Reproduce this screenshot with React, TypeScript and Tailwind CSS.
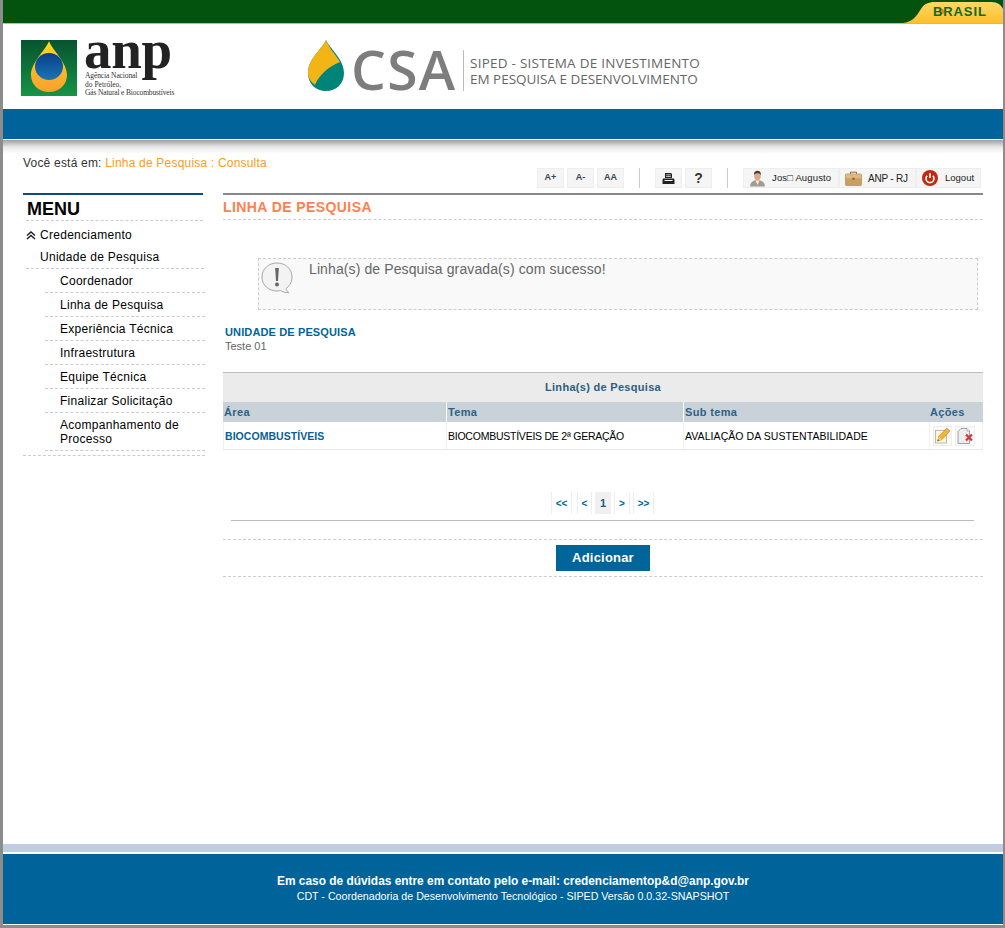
import React from "react";

const dash = "border-b border-dashed border-[#cccccc]";
const colHead = "h-[20px] bg-[#c9d2d9] pl-[1px] text-[11px] font-bold leading-[20px] tracking-[0.35px] text-[#2d6285]";

function Brasil() {
  return (
    <div className="relative w-[100px] h-[23px]">
      <svg width="100" height="23" viewBox="0 0 100 23" className="block">
        <defs>
          <linearGradient id="brGrad" x1="0" y1="0" x2="0" y2="1">
            <stop offset="0" stopColor="#ffd766" />
            <stop offset="1" stopColor="#fdbf2d" />
          </linearGradient>
        </defs>
        <path d="M0 23 C9 22 13 17 18 9 C21 4 25 2 32 2 L88 2 C95 2 98 5 100 9 L100 23 Z" fill="url(#brGrad)" />
        <circle cx="39" cy="11.5" r="2.5" fill="#e8842a" />
      </svg>
      <span className="absolute left-[30px] top-[4px] text-[13px] leading-[16px] font-bold tracking-[0.9px] text-[#0d6b1e]">BRASIL</span>
    </div>
  );
}

function AnpLogo() {
  return (
    <svg width="156" height="60" viewBox="0 0 156 60" className="block overflow-visible">
      <defs>
        <linearGradient id="anpBg" x1="0" y1="0" x2="0" y2="1">
          <stop offset="0" stopColor="#07532f" />
          <stop offset="1" stopColor="#159447" />
        </linearGradient>
        <linearGradient id="anpDrop" x1="0" y1="0" x2="0" y2="1">
          <stop offset="0" stopColor="#ffd91e" />
          <stop offset="1" stopColor="#f8a02e" />
        </linearGradient>
        <linearGradient id="anpBlue" x1="0" y1="0" x2="0" y2="1">
          <stop offset="0" stopColor="#083f86" />
          <stop offset="1" stopColor="#1b74b8" />
        </linearGradient>
      </defs>
      <rect x="0" y="1" width="56" height="56" fill="url(#anpBg)" />
      <path d="M28 2 C31 11 46 23 46 36 C46 46 38 53 28 53 C18 53 10 46 10 36 C10 23 25 11 28 2 Z" fill="url(#anpDrop)" />
      <ellipse cx="28" cy="27.5" rx="14" ry="13.5" fill="url(#anpBlue)" />
      <text x="63" y="29" fontFamily="'Liberation Serif', serif" fontSize="55" fontWeight="700" fill="#222222" letterSpacing="-0.3">anp</text>
      <text x="64" y="39" fontFamily="'Liberation Serif', serif" fontSize="7.5" fill="#333333" letterSpacing="-0.1">Agência Nacional</text>
      <text x="64" y="48" fontFamily="'Liberation Serif', serif" fontSize="7.5" fill="#333333">do Petróleo,</text>
      <text x="64" y="56" fontFamily="'Liberation Serif', serif" fontSize="7.5" fill="#333333" letterSpacing="-0.15">Gás Natural e Biocombustíveis</text>
    </svg>
  );
}

function CsaLogo() {
  return (
    <svg width="396" height="56" viewBox="0 0 396 56" className="block overflow-visible">
      <path d="M18 1 C22 10 36 20 36 34 C36 45 28 52 18 52 C8 52 0 45 0 34 C0 20 14 10 18 1 Z" fill="#008379" />
      <path d="M18 1 C14 10 0 20 0 34 C0 39 3 43 7 46 C11 36 20 28 32 23 C28 16 21 9 18 1 Z" fill="#f2b515" />
      <text x="43" y="51" fontFamily="'Open Sans', sans-serif" fontSize="55" fontWeight="600" fill="#7d7d7d" letterSpacing="1.3">CSA</text>
      <rect x="155" y="11" width="1" height="41" fill="#bbbbbb" />
      <text x="162" y="29" fontFamily="'Open Sans', sans-serif" fontSize="13.5" fill="#666666" letterSpacing="0.25">SIPED - SISTEMA DE INVESTIMENTO</text>
      <text x="162" y="45" fontFamily="'Open Sans', sans-serif" fontSize="13.5" fill="#666666" letterSpacing="-0.02">EM PESQUISA E DESENVOLVIMENTO</text>
    </svg>
  );
}

function ToolBtn({ children, cls }: { children: React.ReactNode; cls: string }) {
  return (
    <div className={`h-[20px] flex items-center bg-[#f5f5f5] border border-[#eeeeee] ${cls}`}>
      {children}
    </div>
  );
}

function Toolbar() {
  return (
    <div className="flex items-center self-end mr-[22px] mb-[5px] text-[#222222]">
      <div className="flex gap-[3px] text-[9px] font-bold text-[#334455]">
        <ToolBtn cls="w-[27px] justify-center">A+</ToolBtn>
        <ToolBtn cls="w-[27px] justify-center">A-</ToolBtn>
        <ToolBtn cls="w-[27px] justify-center">AA</ToolBtn>
      </div>
      <div className="w-px h-[20px] bg-[#cccccc] ml-[15px] mr-[15px]" />
      <div className="flex gap-[3px]">
        <ToolBtn cls="w-[27px] justify-center">
          <svg width="13" height="13" viewBox="0 0 13 13">
            <path d="M3 1 H9 L10 2 V6 H3 Z M4.2 2.5 V3.3 H8.8 V2.5 Z M4.2 4.2 V5 H8.8 V4.2 Z" fill="#222222" fillRule="evenodd" />
            <path d="M1 6.5 H12 L12.5 8 V12 H0.5 V8 Z" fill="#222222" />
            <rect x="2.5" y="8" width="8" height="1" fill="#f5f5f5" />
          </svg>
        </ToolBtn>
        <ToolBtn cls="w-[27px] justify-center"><span className="text-[14px] font-bold text-[#333333]">?</span></ToolBtn>
      </div>
      <div className="w-px h-[20px] bg-[#cccccc] ml-[15px] mr-[15px]" />
      <div className="flex text-[9.5px]">
        <ToolBtn cls="w-[96px] pl-[5px] gap-[6px]">
          <svg width="17" height="17" viewBox="0 0 16 17">
            <path d="M0.5 16.5 C0.8 12.5 3 11 6 10.3 H10 C13 11 15.2 12.5 15.5 16.5 Z" fill="#a39a90" />
            <path d="M6 10.5 L8 15 L10 10.5 Z" fill="#eeeeee" />
            <ellipse cx="8" cy="5.8" rx="3.3" ry="4.6" fill="#d9a988" />
            <path d="M4.6 5 C4.4 1.5 6.5 0.8 8 0.8 C10 0.8 11.6 2 11.4 5 C10.5 3.5 9 3.2 8 3.2 C6.5 3.2 5.2 3.8 4.6 5 Z" fill="#4a3a30" />
          </svg>
          <span className="tracking-[0.15px]">Jos□ Augusto</span>
        </ToolBtn>
        <ToolBtn cls="w-[77px] pl-[5px] gap-[6px]">
          <svg width="17" height="15" viewBox="0 0 17 15">
            <path d="M5.5 3 V1.2 H11.5 V3" fill="none" stroke="#8a6a3a" strokeWidth="1" />
            <rect x="0.5" y="3" width="16" height="11.5" rx="0.8" fill="#c9a063" stroke="#a67f45" strokeWidth="0.6" />
            <rect x="0.8" y="3.3" width="15.4" height="4" fill="#dcb97f" />
            <rect x="7.5" y="6.8" width="2" height="2" fill="#7d5c2d" />
          </svg>
          <span className="text-[10px] tracking-[-0.2px]">ANP - RJ</span>
        </ToolBtn>
        <ToolBtn cls="w-[65px] pl-[5px] gap-[7px]">
          <svg width="16" height="16" viewBox="0 0 16 16">
            <circle cx="8" cy="8" r="8" fill="#c0290f" />
            <path d="M5.2 5.8 A4 4 0 1 0 10.8 5.8" fill="none" stroke="#ffffff" strokeWidth="1.6" />
            <rect x="7.2" y="3" width="1.6" height="5" fill="#ffffff" />
          </svg>
          <span>Logout</span>
        </ToolBtn>
      </div>
    </div>
  );
}

function SideItem({ children }: { children: React.ReactNode }) {
  return <div className={`ml-[22px] -mr-[1px] pl-[15px] pr-[10px] pt-[5px] pb-[4px] leading-[14px] ${dash}`}>{children}</div>;
}

function Menu() {
  return (
    <aside className="w-[180px] shrink-0 text-[12px] tracking-[0.28px] text-black">
      <div className="border-t-2 border-[#0a4d86] w-[180px] h-[27px] pl-[4px] pt-[3px] text-[18px] leading-[22px] font-bold tracking-normal">MENU</div>
      <div className="ml-[3px] w-[177px] border-b border-dashed border-[#cccccc]" />
      <div className="ml-[3px] w-[177px] pt-[6px] flex items-center h-[21px] leading-[14px]">
        <svg width="10" height="9" viewBox="0 0 10 9" className="mr-[4px] mt-[1px]">
          <path d="M1 4.5 L5 1 L9 4.5 M1 8 L5 4.5 L9 8" fill="none" stroke="#222222" strokeWidth="1.5" />
        </svg>
        Credenciamento
      </div>
      <div className="ml-[3px] w-[178px]">
        <div className={`pl-[14px] pt-[8px] pb-[3px] leading-[15px] ${dash}`}>Unidade de Pesquisa</div>
        <div className="-ml-[3px]">
          <SideItem>Coordenador</SideItem>
          <SideItem>Linha de Pesquisa</SideItem>
          <SideItem>Experiência Técnica</SideItem>
          <SideItem>Infraestrutura</SideItem>
          <SideItem>Equipe Técnica</SideItem>
          <SideItem>Finalizar Solicitação</SideItem>
          <SideItem>Acompanhamento de Processo</SideItem>
        </div>
      </div>
      <div className="mt-[4px] w-[182px] border-b border-dashed border-[#cccccc]" />
    </aside>
  );
}

function Pager({ children, cls, active }: { children: React.ReactNode; cls: string; active?: boolean }) {
  return (
    <div className={`h-[22px] flex items-center justify-center font-bold ${active ? "text-[11px] bg-[#f0f0f0] text-[#1a5a80]" : "text-[10px] text-[#006699] border-x border-[#eeeeee]"} ${cls}`}>
      {children}
    </div>
  );
}

function Main() {
  return (
    <main className="ml-[20px] w-[760px] shrink-0 border-t-2 border-[#888888] text-[12px]">
      <div className={`h-[25px] pt-[4px] text-[14px] leading-[17px] font-bold tracking-[0.42px] text-[#ff7f50] ${dash}`}>LINHA DE PESQUISA</div>
      <div className="mt-[38px] ml-[35px] w-[720px] h-[52px] border border-dashed border-[#cccccc] bg-[#f9f9f9] flex">
        <svg width="34" height="34" viewBox="0 0 34 34" className="mt-[2px] ml-[1px] shrink-0">
          <path d="M17 2 C25.5 2 32 8 32 16 C32 22 28.5 26 26 27.5 C26 29 27.5 31 29 31.5 C25 32 22 30.5 20.5 29.5 C19 30 18 30 17 30 C8.5 30 2 24 2 16 C2 8 8.5 2 17 2 Z" fill="#f3f3f3" stroke="#a8a8a8" strokeWidth="1" />
          <path d="M15.2 7 H18.8 L18 20 H16 Z" fill="#666666" />
          <circle cx="17" cy="23.5" r="2" fill="#666666" />
        </svg>
        <div className="ml-[15px] pt-[1px] text-[14px] leading-[18px] tracking-[0.11px] text-[#666666]">Linha(s) de Pesquisa gravada(s) com sucesso!</div>
      </div>
      <div className="mt-[15px] ml-[2px] text-[11px] leading-[15px] font-bold tracking-[0.13px] text-[#006699]">UNIDADE DE PESQUISA</div>
      <div className="ml-[2px] text-[11px] leading-[13px] text-[#666666]">Teste 01</div>

      <div className="mt-[19px] w-[760px]">
        <div className="h-[30px] border-t border-[#bbbbc0] bg-[#ebebeb] flex items-center justify-center text-[11px] font-bold tracking-[0.3px] text-[#2d5f80]">
          Linha(s) de Pesquisa
        </div>
        <div className="grid grid-cols-[223px_236px_245px_53px] gap-x-px w-[760px]">
          <div className={colHead}>Área</div>
          <div className={colHead}>Tema</div>
          <div className={colHead}>Sub tema</div>
          <div className={`${colHead} -ml-px`}>Ações</div>
        </div>
        <div className="grid grid-cols-[224px_237px_246px_53px] h-[28px] border-b border-[#e8e8e8] text-[10.5px] text-black">
          <div className="pl-[1px] pt-[2px] flex items-center font-bold tracking-[0.05px] text-[#0a5f96] border-x border-[#f0f0f0]">BIOCOMBUSTÍVEIS</div>
          <div className="pl-[1px] pt-[2px] flex items-center tracking-[-0.24px] border-r border-[#f0f0f0]">BIOCOMBUSTÍVEIS DE 2ª GERAÇÃO</div>
          <div className="pl-[1px] pt-[2px] flex items-center tracking-[0.07px] border-r border-[#f0f0f0]">AVALIAÇÃO DA SUSTENTABILIDADE</div>
          <div className="flex items-center justify-end gap-[3px] pr-[7px] border-r border-[#f0f0f0]">
            <div className="w-[19px] h-[20px] flex items-center justify-center bg-[#fafafa] border border-[#eeeeee]">
              <svg width="17" height="17" viewBox="0 0 17 17">
                <rect x="1.5" y="3.5" width="11" height="12.5" fill="#fff6da" stroke="#b5ab8c" strokeWidth="0.8" />
                <path d="M3.5 14 L4.8 9.5 L12.8 1.2 L16 4 L8 12.5 Z" fill="#f2b632" stroke="#b7791f" strokeWidth="0.6" />
                <path d="M3.5 14 L4.8 9.5 L8 12.5 Z" fill="#e8c9a0" />
                <path d="M3.5 14 L4 12.3 L5.3 13.4 Z" fill="#5a4020" />
              </svg>
            </div>
            <div className="w-[20px] h-[20px] flex items-center justify-center bg-[#fafafa] border border-[#eeeeee]">
              <svg width="18" height="18" viewBox="0 0 18 18">
                <path d="M5 1.5 H11 L13.5 4 V16.5 H2 V4.5 Z" fill="#ededed" stroke="#8c8c8c" strokeWidth="0.8" />
                <path d="M11 1.5 V4 H13.5" fill="#ffffff" stroke="#8c8c8c" strokeWidth="0.6" />
                <path d="M10 7.5 L16 13.5 M16 7.5 L10 13.5" stroke="#d9333f" strokeWidth="2.2" />
              </svg>
            </div>
          </div>
        </div>
      </div>

      <div className="mt-[42px] ml-[328px] flex">
        <Pager cls="w-[21px]">&lt;&lt;</Pager>
        <Pager cls="w-[15px] ml-[5px]">&lt;</Pager>
        <Pager active cls="w-[16px] ml-[3px]">1</Pager>
        <Pager cls="w-[16px] ml-[3px]">&gt;</Pager>
        <Pager cls="w-[21px] ml-[3px]">&gt;&gt;</Pager>
      </div>
      <div className="mt-[6px] ml-[8px] w-[743px] border-b border-[#bbbbbb]" />
      <div className={`mt-[18px] ${dash}`} />
      <div className={`pt-[5px] pb-[5px] flex justify-center ${dash}`}>
        <button className="w-[94px] h-[26px] bg-[#006699] text-white text-[13px] font-bold tracking-[0.2px]">Adicionar</button>
      </div>
    </main>
  );
}

export default function App() {
  return (
    <div className="w-[1005px] h-[928px] bg-[#8c8c8c] pl-[3px] pr-[2px] pb-[3px] overflow-hidden font-['Liberation_Sans',Arial,sans-serif]">
      <div className="w-[1000px] h-[925px] bg-white flex flex-col">
        <div className="h-[24px] shrink-0 bg-[#03530f] border-b border-[#f3bb12] flex justify-end">
          <Brasil />
        </div>
        <div className="h-[85px] shrink-0 flex bg-white items-start">
          <div className="ml-[18px] mt-[15px]"><AnpLogo /></div>
          <div className="ml-[131px] mt-[15px]"><CsaLogo /></div>
        </div>
        <div className="h-[30px] shrink-0 bg-[#00649a]" />
        <div className="h-[1px] shrink-0 bg-white" />
        <div className="h-[14px] shrink-0 bg-gradient-to-b from-[#a0a0a0] via-[#e8e8e8] to-white" />
        <div className="h-[39px] shrink-0 flex justify-between">
          <div className="ml-[20px] mt-[2px] text-[12px] leading-[14px] tracking-[0.2px] text-[#333333]">
            Você está em: <span className="text-[#ff9a1a]">Linha de Pesquisa : Consulta</span>
          </div>
          <Toolbar />
        </div>
        <div className="flex-1 flex items-start pl-[20px]">
          <Menu />
          <Main />
        </div>
        <div className="h-[8px] shrink-0 bg-[#c0cde0]" />
        <div className="h-[2px] shrink-0 bg-white" />
        <div className="h-[70px] shrink-0 bg-[#00649a] flex flex-col items-center pt-[20px] pl-[20px] text-white">
          <div className="text-[11.9px] leading-[15px] font-bold">Em caso de dúvidas entre em contato pelo e-mail: credenciamentop&amp;d@anp.gov.br</div>
          <div className="text-[10.67px] leading-[14px]">CDT - Coordenadoria de Desenvolvimento Tecnológico - SIPED Versão 0.0.32-SNAPSHOT</div>
        </div>
        <div className="h-[1px] shrink-0 bg-white" />
      </div>
    </div>
  );
}
